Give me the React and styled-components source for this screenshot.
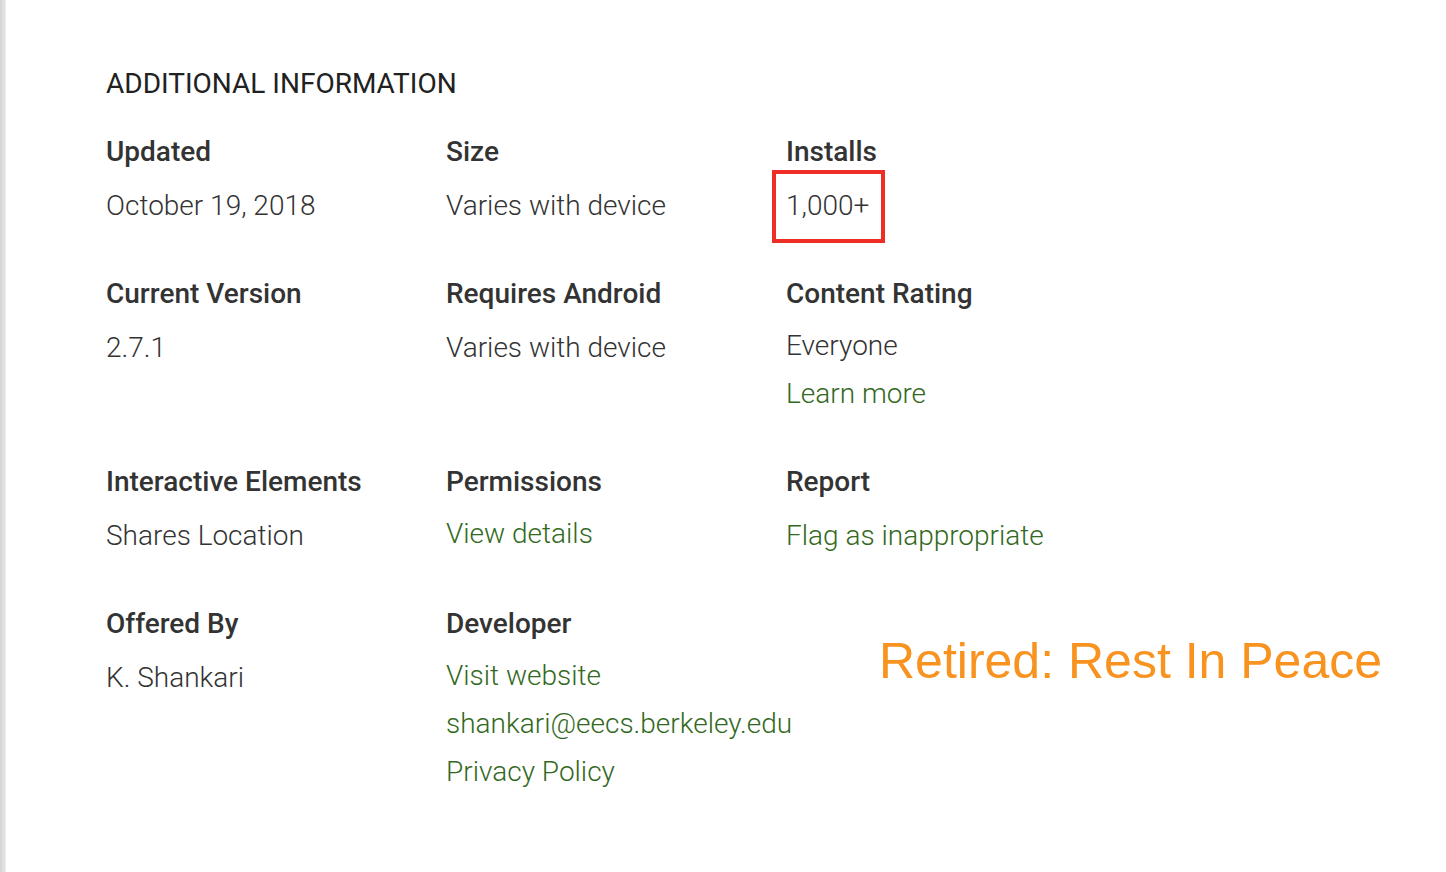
import React from 'react';
import styled, { createGlobalStyle } from 'styled-components';

const GlobalStyle = createGlobalStyle`
  html, body {
    margin: 0;
    padding: 0;
    background: #fff;
  }
  body {
    font-family: Roboto, "Noto Sans", Arial, sans-serif;
    color: #333;
  }
`;

const Page = styled.div`
  min-height: 872px;
  box-sizing: border-box;
  padding: 60px 0 0 106px;
  background: linear-gradient(to right, #d4d4d4 0, #e6e6e6 5px, #f2f2f2 6px, #fff 6px);
`;

const Title = styled.h2`
  margin: 0 0 20px;
  font-size: 28px;
  font-weight: 400;
  line-height: 48px;
  color: #212121;
`;

const Grid = styled.div`
  display: grid;
  grid-template-columns: repeat(3, 340px);
  row-gap: 40px;
`;

const Cell = styled.div`
  display: flex;
  flex-direction: column;
  min-width: 0;
`;

const Label = styled.div`
  font-size: 28px;
  font-weight: 500;
  line-height: 48px;
  color: #333;
  margin-bottom: 6px;
`;

const Value = styled.div`
  font-size: 28px;
  font-weight: 300;
  line-height: 48px;
  color: #333;
  white-space: nowrap;
  margin-top: ${({ lift }) => (lift ? '-2px' : '0')};
`;

const Link = styled.a`
  display: block;
  font-size: 28px;
  font-weight: 300;
  line-height: 48px;
  color: #33691e;
  text-decoration: none;
  white-space: nowrap;
  margin-top: ${({ lift }) => (lift ? '-2px' : '0')};
  margin-bottom: ${({ lift }) => (lift ? '2px' : '0')};
`;

const Highlight = styled.span`
  position: relative;
  display: inline-block;

  &::after {
    content: '';
    position: absolute;
    inset: -12px -16px -13px -14px;
    border: 4px solid #ee2d24;
  }
`;

const Note = styled.div`
  margin: 32px 0 0 93px;
  font-family: "Liberation Sans", Arial, sans-serif;
  font-size: 50px;
  line-height: normal;
  color: #f7931e;
  white-space: nowrap;
`;

const Item = ({ label, children }) => (
  <Cell>
    <Label>{label}</Label>
    {children}
  </Cell>
);

const App = () => (
  <>
    <GlobalStyle />
    <Page>
      <Title>ADDITIONAL INFORMATION</Title>
      <Grid>
        <Item label="Updated">
          <Value>October 19, 2018</Value>
        </Item>
        <Item label="Size">
          <Value>Varies with device</Value>
        </Item>
        <Item label="Installs">
          <Value>
            <Highlight>1,000+</Highlight>
          </Value>
        </Item>

        <Item label="Current Version">
          <Value>2.7.1</Value>
        </Item>
        <Item label="Requires Android">
          <Value>Varies with device</Value>
        </Item>
        <Item label="Content Rating">
          <Value lift>Everyone</Value>
          <Link href="#">Learn more</Link>
        </Item>

        <Item label="Interactive Elements">
          <Value>Shares Location</Value>
        </Item>
        <Item label="Permissions">
          <Link href="#" lift>View details</Link>
        </Item>
        <Item label="Report">
          <Link href="#">Flag as inappropriate</Link>
        </Item>

        <Item label="Offered By">
          <Value>K. Shankari</Value>
        </Item>
        <Item label="Developer">
          <Link href="#" lift>Visit website</Link>
          <Link href="#" lift>shankari@eecs.berkeley.edu</Link>
          <Link href="#" lift>Privacy Policy</Link>
        </Item>
        <Cell>
          <Note>Retired: Rest In Peace</Note>
        </Cell>
      </Grid>
    </Page>
  </>
);

export default App;
